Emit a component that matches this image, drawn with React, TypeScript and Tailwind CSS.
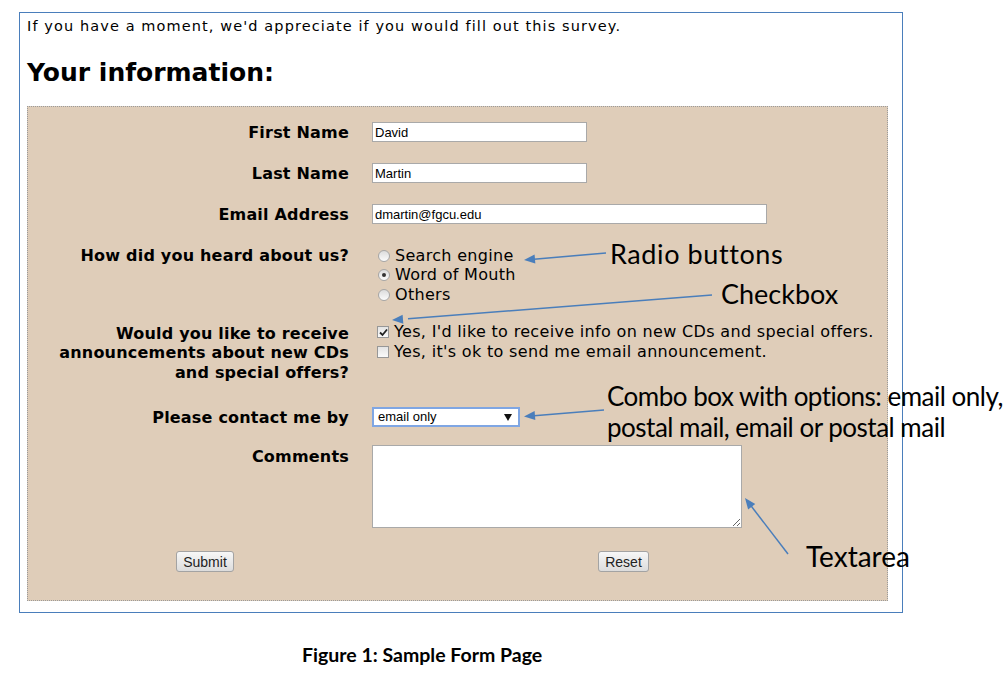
import React from 'react';

const verdana = { fontFamily: '"DejaVu Sans", Verdana, sans-serif' };
const calibri = { fontFamily: 'Lato, "Open Sans", sans-serif' };

function arrowHead(tipX: number, tipY: number, tailX: number, tailY: number) {
  const dx = tailX - tipX;
  const dy = tailY - tipY;
  const len = Math.sqrt(dx * dx + dy * dy);
  const ux = dx / len;
  const uy = dy / len;
  const bx = tipX + ux * 11;
  const by = tipY + uy * 11;
  const px = -uy * 4.5;
  const py = ux * 4.5;
  return `${tipX},${tipY} ${bx + px},${by + py} ${bx - px},${by - py}`;
}

const arrows = [
  { tip: [524, 260], tail: [606, 253] },
  { tip: [392, 320], tail: [712, 295] },
  { tip: [524, 416.5], tail: [604, 410] },
  { tip: [745, 498], tail: [788, 554] },
];

function Radio({ checked, label }: { checked?: boolean; label: string }) {
  return (
    <div className="flex items-center h-[19.5px]">
      <span className="ml-[6px] w-[12px] h-[12px] rounded-full border border-[#a6a6a6] bg-gradient-to-b from-[#dcdcdc] to-[#fbfbfb] flex items-center justify-center shrink-0">
        {checked && <span className="w-[4px] h-[4px] rounded-full bg-[#333]" />}
      </span>
      <span className="ml-[5px]">{label}</span>
    </div>
  );
}

function Check({ checked, label }: { checked?: boolean; label: string }) {
  return (
    <div className="flex items-center h-[19.5px]">
      <span className="ml-[5px] w-[12px] h-[12px] border border-[#979797] bg-gradient-to-b from-[#e4e4e4] to-[#fafafa] flex items-center justify-center shrink-0">
        {checked && (
          <svg width="9" height="9" viewBox="0 0 9 9">
            <path d="M1 4.5 L3.5 7 L8 1.5" fill="none" stroke="#222" strokeWidth="1.8" />
          </svg>
        )}
      </span>
      <span className="ml-[5px]">{label}</span>
    </div>
  );
}

function Label({ children, className = '' }: { children: React.ReactNode; className?: string }) {
  return (
    <div className={`w-[321px] shrink-0 text-right font-bold text-[16px] leading-[19.5px] tracking-[0.2px] ${className}`}>
      {children}
    </div>
  );
}

const inputCls =
  'h-[20px] bg-white border border-[#a9a9a9] px-[2px] text-[13px] text-black outline-none';
const arial = { fontFamily: '"Liberation Sans", Arial, sans-serif' };

export default function App() {
  return (
    <div className="relative w-[1008px] h-[676px] bg-white overflow-hidden text-black" style={verdana}>
      <div className="pt-[12px] pl-[19px]">
        <div className="w-[884px] h-[601px] border border-[#4a7ebb] pl-[7px] pt-[5px]">
          <p className="text-[14.5px] leading-[17px] tracking-[1.1px]">
            If you have a moment, we'd appreciate if you would fill out this survey.
          </p>
          <h2 className="mt-[23px] text-[25px] leading-[30px] font-bold">Your information:</h2>

          <div className="mt-[18px] w-[861px] h-[495px] bg-[#dfcdb9] border border-dotted border-[#9a9a9a] pt-[15px]">
            <div className="flex items-center h-[20px]">
              <Label className="pt-[1px]">First Name</Label>
              <input readOnly defaultValue="David" className={`ml-[23px] w-[215px] ${inputCls}`} style={arial} />
            </div>
            <div className="mt-[21px] flex items-center h-[20px]">
              <Label className="pt-[1px]">Last Name</Label>
              <input readOnly defaultValue="Martin" className={`ml-[23px] w-[215px] ${inputCls}`} style={arial} />
            </div>
            <div className="mt-[21px] flex items-center h-[20px]">
              <Label className="pt-[1px]">Email Address</Label>
              <input
                readOnly
                defaultValue="dmartin@fgcu.edu"
                className={`ml-[23px] w-[395px] ${inputCls}`}
                style={arial}
              />
            </div>

            <div className="mt-[21px] flex items-start">
              <Label className="pt-[1px]">How did you heard about us?</Label>
              <div className="ml-[23px] text-[16px] tracking-[0.3px] pt-[1px]">
                <Radio label="Search engine" />
                <Radio checked label="Word of Mouth" />
                <Radio label="Others" />
              </div>
            </div>

            <div className="mt-[18px] flex items-start">
              <Label className="pt-[1px]">
                Would you like to receive
                <br />
                announcements about new CDs
                <br />
                and special offers?
              </Label>
              <div className="ml-[23px] text-[16px] tracking-[0.33px]">
                <Check checked label="Yes, I'd like to receive info on new CDs and special offers." />
                <Check label="Yes, it's ok to send me email announcement." />
              </div>
            </div>

            <div className="mt-[25px] flex items-center h-[20px]">
              <Label className="pt-[1px]">Please contact me by</Label>
              <div
                className="ml-[23px] w-[148px] h-[20px] bg-white border-2 border-[#7fa6e3] flex items-center justify-between pl-[4px] pr-[6px] text-[13px]"
                style={arial}
              >
                <span>email only</span>
                <svg width="8" height="7" viewBox="0 0 8 7">
                  <polygon points="0,0 8,0 4,7" fill="#111" />
                </svg>
              </div>
            </div>

            <div className="mt-[18px] flex items-start">
              <Label className="pt-[2px]">Comments</Label>
              <textarea readOnly className="ml-[23px] w-[370px] h-[83px] bg-white border border-[#a9a9a9] outline-none" />
            </div>

            <div className="mt-[23px] flex items-center" style={arial}>
              <button className="ml-[148px] w-[58px] h-[21px] rounded-[3px] border border-[#a3a3a3] bg-gradient-to-b from-[#f7f7f7] to-[#dcdcdc] text-[14px] leading-none text-[#222]">
                Submit
              </button>
              <button className="ml-[364px] w-[51px] h-[21px] rounded-[3px] border border-[#a3a3a3] bg-gradient-to-b from-[#f7f7f7] to-[#dcdcdc] text-[14px] leading-none text-[#222]">
                Reset
              </button>
            </div>
          </div>
        </div>
        <p className="mt-[31px] ml-[283px] text-[19.5px] leading-[22px] font-bold" style={calibri}>
          Figure 1: Sample Form Page
        </p>
      </div>

      <svg className="absolute left-0 top-0 pointer-events-none" width="1008" height="676">
        {arrows.map((a, i) => (
          <g key={i}>
            <line
              x1={a.tail[0]}
              y1={a.tail[1]}
              x2={a.tip[0] + (a.tail[0] - a.tip[0]) * 0.05}
              y2={a.tip[1] + (a.tail[1] - a.tip[1]) * 0.05}
              stroke="#4a7ebb"
              strokeWidth="1.5"
            />
            <polygon points={arrowHead(a.tip[0], a.tip[1], a.tail[0], a.tail[1])} fill="#4a7ebb" />
          </g>
        ))}
      </svg>

      <div className="absolute inset-0 pointer-events-none text-black" style={calibri}>
        <div className="absolute left-[610px] top-[240px] text-[27px] leading-[27px] tracking-[0.6px]">Radio buttons</div>
        <div className="absolute left-[721px] top-[280px] text-[27px] leading-[27px]">Checkbox</div>
        <div className="absolute left-[607px] top-[381px] text-[26px] leading-[31px] tracking-[-0.5px] whitespace-nowrap">
          Combo box with options: email only,
          <br />
          postal mail, email or postal mail
        </div>
        <div className="absolute left-[806px] top-[542px] text-[28px] leading-[28px]">Textarea</div>
      </div>
    </div>
  );
}
